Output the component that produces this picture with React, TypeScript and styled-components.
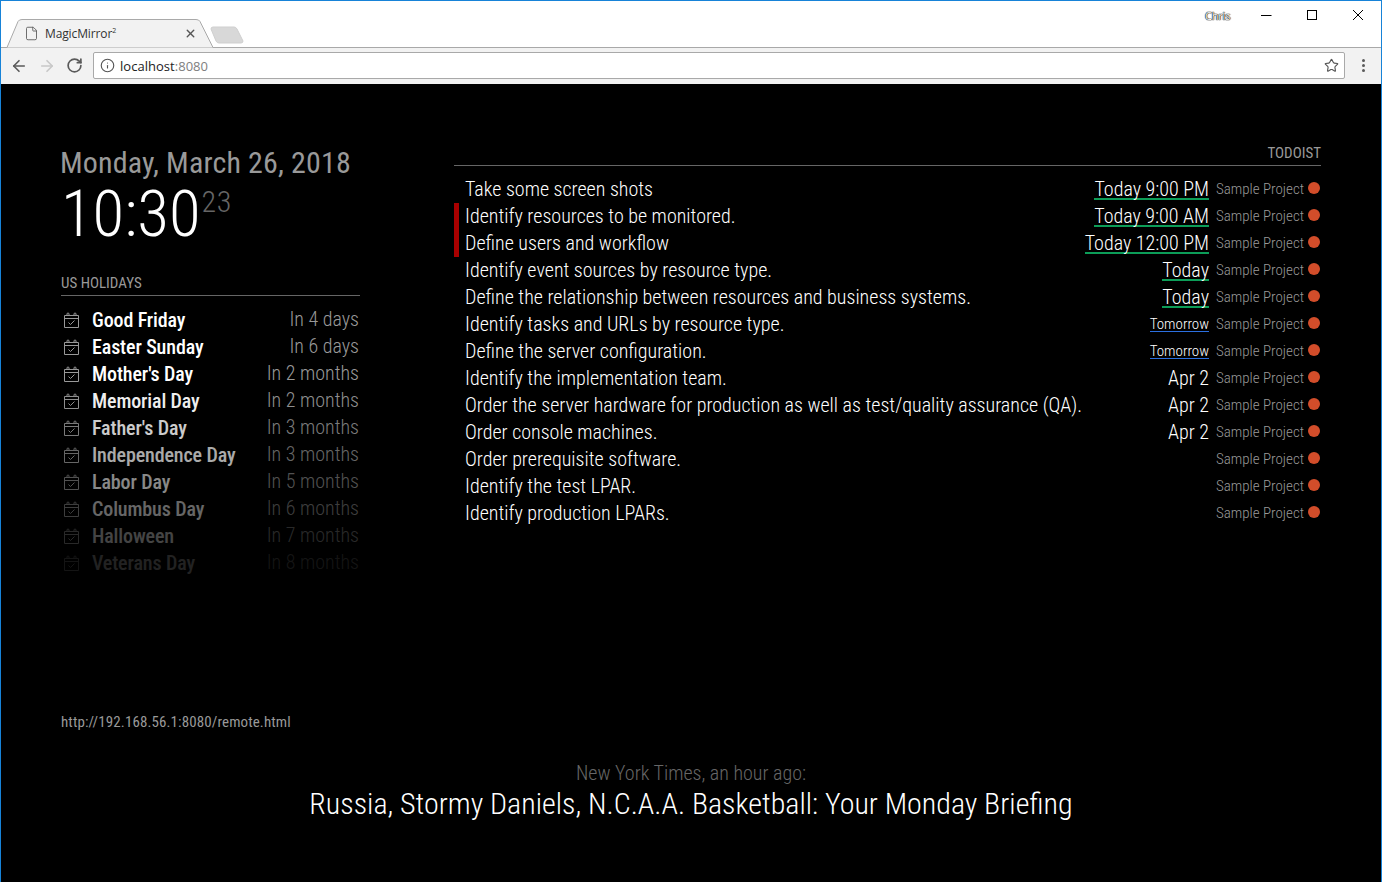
import React from "react";
import styled, { createGlobalStyle } from "styled-components";
import { ArrowLeft, ArrowRight, RotateCw, Star, Info, File, X } from "lucide-react";

const Global = createGlobalStyle`
  html, body { margin: 0; padding: 0; background: #000; }
  body { font-family: Roboto, "Liberation Sans", sans-serif; overflow: hidden; }
`;
const Win = styled.div`
  width: 1382px; height: 882px; box-sizing: border-box; border: 1px solid #1783d8; border-bottom: 0;
  display: flex; flex-direction: column; background: #000; overflow: hidden;
`;
const TitleBar = styled.div`
  height: 46px; background: #fff; display: flex; align-items: flex-end; border-bottom: 1px solid #a9a9a9; box-sizing: content-box; position: relative;
`;
const Tab = styled.div`
  position: relative; width: 207px; height: 29px; margin-left: 5px; margin-bottom: -1px; display: flex; align-items: center; padding-left: 18px; box-sizing: border-box;
`;
const TabShape = styled.svg`position: absolute; left: 0; top: 0;`;
const TabIcon = styled(File)`position: relative; color: #5a5a5a;`;
const TabTitle = styled.span`position: relative; font: 12px "Open Sans", sans-serif; color: #333; margin-left: 6px; flex: 1; letter-spacing: -0.12px; sup { font-size: 7px; line-height: 0; }`;
const TabClose = styled(X)`position: relative; color: #555; margin-right: 16px;`;
const NewTab = styled.svg`margin: 0 0 3px -3px;`;
const Spacer = styled.div`flex: 1;`;
const User = styled.span`
  position: absolute; left: 1204px; top: 8px; font: 11px/14px "Open Sans", sans-serif; color: #fff; letter-spacing: -0.2px;
  text-shadow: 0 0 1px #000, 0 0 1px #000, 0 0 1px #000;
`;
const WinBtns = styled.div`position: absolute; right: 0; top: 0; display: flex;`;
const WinBtn = styled.div`width: 46px; height: 28px; display: flex; align-items: center; justify-content: center;`;
const Toolbar = styled.div`
  height: 36px; background: #f2f2f2; display: flex; align-items: center; padding: 0 9px 1px 9px; box-sizing: border-box;
`;
const NavIcon = styled.div<{ $off?: boolean }>`width: 28px; display: flex; justify-content: flex-start; color: ${p => (p.$off ? "#c8c8c8" : "#5a5a5a")};`;
const Omni = styled.div`
  flex: 1; height: 27px; margin: 0 8px 0 -1px; background: #fff; border: 1px solid #a9a9a9; border-radius: 2px; box-sizing: border-box;
  display: flex; align-items: center; padding: 0 5px 0 6px; gap: 5px;
`;
const Url = styled.span`font: 13px "Open Sans", sans-serif; color: #222; flex: 1; letter-spacing: 0.03px; em { font-style: normal; color: #808080; }`;
const Dots = styled.div`width: 20px; display: flex; flex-direction: column; align-items: center; gap: 2px; margin-right: -1px;
  i { width: 3px; height: 3px; border-radius: 50%; background: #5a5a5a; display: block; }`;
const Mirror = styled.div`
  flex: 1; background: #000; padding: 61px 60px 0 60px; display: flex; flex-direction: column; position: relative;
  font-stretch: 75%;
`;
const Columns = styled.div`display: flex; height: 568px;`;
const Left = styled.div`width: 299px; margin-right: 94px; flex: none;`;
const Right = styled.div`flex: 1;`;
const DateLine = styled.div`font-size: 30px; line-height: 35px; color: #999; font-weight: 400; letter-spacing: 0.14px; margin-left: -1px;`;
const Time = styled.div`font-size: 65px; line-height: 65px; color: #fff; font-weight: 300; margin-top: 2px; display: flex; align-items: flex-start;`;
const Sec = styled.span`font-size: 30px; line-height: 30px; color: #666; margin-top: 5px; margin-left: 1px; letter-spacing: 0.6px;`;
const Header = styled.div<{ $right?: boolean }>`
  font-size: 15px; line-height: 15px; color: #999; text-transform: uppercase; border-bottom: 1px solid #666; padding-bottom: 3px; height: 16px; box-sizing: content-box;
  text-align: ${p => (p.$right ? "right" : "left")};
`;
const HolHeader = styled(Header)`margin-top: 29px; margin-bottom: 10px;`;
const HolRow = styled.div`display: flex; height: 27px; align-items: center; font-size: 20px; color: #fff;`;
const HolIcon = styled.svg`width: 15px; height: 16px; color: #999; margin: 1px 13px 0 3px; flex: none; fill: none; stroke: currentColor;`;
const HolTitle = styled.span`flex: 1; font-weight: 500; letter-spacing: -0.12px;`;
const HolTime = styled.span`color: #999; font-weight: 300; padding-right: 1px; margin-top: -1px;`;
const TodoHeader = styled(Header)`margin-top: 1px; margin-bottom: 9px;`;
const TodoRow = styled.div`display: flex; height: 27px; align-items: center; position: relative; padding-left: 11px;`;
const Bar = styled.div`position: absolute; left: 0; top: 1px; bottom: -1px; width: 5px; background: #a80000;`;
const TodoText = styled.span`flex: 1; font-size: 20px; font-weight: 300; color: #fff; white-space: nowrap;`;
const Due = styled.span<{ $c?: string; $small?: boolean }>`
  font-size: ${p => (p.$small ? "15px" : "20px")}; font-weight: 300; color: #fff;
  line-height: ${p => (p.$small ? "14px" : "18px")}; margin-top: 2px;
  border-bottom: ${p => (p.$small ? 1 : 2)}px solid ${p => p.$c ?? "transparent"}; margin-right: 7px; white-space: nowrap;
`;
const Project = styled.span`font-size: 15px; font-weight: 300; color: #999; width: 89px; white-space: nowrap;`;
const Dot = styled.span`width: 12px; height: 12px; border-radius: 50%; background: #d24d2a; margin: -1px 1px 0 3px; flex: none;`;
const Remote = styled.div`font-size: 15px; line-height: 18px; color: #999; font-weight: 400; letter-spacing: 0.11px;`;
const News = styled.div`position: absolute; left: 0; right: 0; top: 678px; text-align: center;`;
const NewsSrc = styled.div`font-size: 20px; line-height: 23px; font-weight: 300; color: #666;`;
const NewsTitle = styled.div`font-size: 30px; line-height: 38px; font-weight: 300; color: #fff; margin-top: 0;`;

const hols: [string, string, number][] = [
  ["Good Friday", "In 4 days", 1], ["Easter Sunday", "In 6 days", 1], ["Mother's Day", "In 2 months", 1],
  ["Memorial Day", "In 2 months", 0.933], ["Father's Day", "In 3 months", 0.8], ["Independence Day", "In 3 months", 0.667],
  ["Labor Day", "In 5 months", 0.533], ["Columbus Day", "In 6 months", 0.4], ["Halloween", "In 7 months", 0.267], ["Veterans Day", "In 8 months", 0.133],
];
const G = "#0c9d58", B = "#2b6fe0";
const todos: [string, string, string | undefined, boolean, boolean][] = [
  ["Take some screen shots", "Today 9:00 PM", G, false, false],
  ["Identify resources to be monitored.", "Today 9:00 AM", G, false, true],
  ["Define users and workflow", "Today 12:00 PM", G, false, true],
  ["Identify event sources by resource type.", "Today", G, false, false],
  ["Define the relationship between resources and business systems.", "Today", G, false, false],
  ["Identify tasks and URLs by resource type.", "Tomorrow", B, true, false],
  ["Define the server configuration.", "Tomorrow", B, true, false],
  ["Identify the implementation team.", "Apr 2", undefined, false, false],
  ["Order the server hardware for production as well as test/quality assurance (QA).", "Apr 2", undefined, false, false],
  ["Order console machines.", "Apr 2", undefined, false, false],
  ["Order prerequisite software.", "", undefined, false, false],
  ["Identify the test LPAR.", "", undefined, false, false],
  ["Identify production LPARs.", "", undefined, false, false],
];

export default function App() {
  return (
    <Win>
      <Global />
      <TitleBar>
        <Tab>
          <TabShape width="208" height="29" viewBox="0 0 208 29">
            <path d="M0 28.5 H1 L12 2.5 Q13 0.5 16 0.5 H190 Q193 0.5 194 2.5 L207 28.5" fill="#f2f2f2" stroke="#a9a9a9" />
          </TabShape>
          <TabIcon size={15} strokeWidth={1.4} />
          <TabTitle>MagicMirror<sup>2</sup></TabTitle>
          <TabClose size={13} strokeWidth={2.6} />
        </Tab>
        <NewTab width="36" height="18" viewBox="0 0 36 18">
          <path d="M3 1 H24 Q26 1 27 3 L33 15 Q33 17 31 17 H9 Q7 17 6 15 L1 3 Q1 1 3 1Z" fill="#d8d8d8" stroke="#cfcfcf" />
        </NewTab>
        <Spacer />
        <User>Chris</User>
        <WinBtns>
          <WinBtn><svg width="12" height="12"><path d="M1 6.5H11.5" stroke="#000" /></svg></WinBtn>
          <WinBtn><svg width="12" height="12"><rect x="1.5" y="1.5" width="9" height="9" fill="none" stroke="#000" /></svg></WinBtn>
          <WinBtn><svg width="12" height="12"><path d="M1 1L11 11M11 1L1 11" stroke="#000" /></svg></WinBtn>
        </WinBtns>
      </TitleBar>
      <Toolbar>
        <NavIcon><ArrowLeft size={18} strokeWidth={2.2} /></NavIcon>
        <NavIcon $off><ArrowRight size={18} strokeWidth={2.2} /></NavIcon>
        <NavIcon><RotateCw size={17} strokeWidth={2.4} /></NavIcon>
        <Omni>
          <Info size={15} strokeWidth={1.8} color="#555" />
          <Url>localhost<em>:8080</em></Url>
          <Star size={15} strokeWidth={1.8} color="#555" />
        </Omni>
        <Dots><i /><i /><i /></Dots>
      </Toolbar>
      <Mirror>
        <Columns>
          <Left>
            <DateLine>Monday, March 26, 2018</DateLine>
            <Time>10:30<Sec>23</Sec></Time>
            <HolHeader>US Holidays</HolHeader>
            {hols.map(([t, w, o]) => (
              <HolRow key={t} style={{ opacity: o }}>
                <HolIcon viewBox="0 0 15 16">
                  <path d="M.5 3.5h14v12H.5zM.5 6.5h14M3 3.5V2a1 1 0 0 1 2 0v1.5M10 3.5V2a1 1 0 0 1 2 0v1.5M4.5 10.5l2 2 4-4" />
                </HolIcon>
                <HolTitle>{t}</HolTitle>
                <HolTime>{w}</HolTime>
              </HolRow>
            ))}
          </Left>
          <Right>
            <TodoHeader $right>Todoist</TodoHeader>
            {todos.map(([t, d, c, s, b]) => (
              <TodoRow key={t}>
                {b && <Bar />}
                <TodoText>{t}</TodoText>
                {d && <Due $c={c} $small={s}>{d}</Due>}
                <Project>Sample Project</Project>
                <Dot />
              </TodoRow>
            ))}
          </Right>
        </Columns>
        <Remote>http://192.168.56.1:8080/remote.html</Remote>
        <News>
          <NewsSrc>New York Times, an hour ago:</NewsSrc>
          <NewsTitle>Russia, Stormy Daniels, N.C.A.A. Basketball: Your Monday Briefing</NewsTitle>
        </News>
      </Mirror>
    </Win>
  );
}
